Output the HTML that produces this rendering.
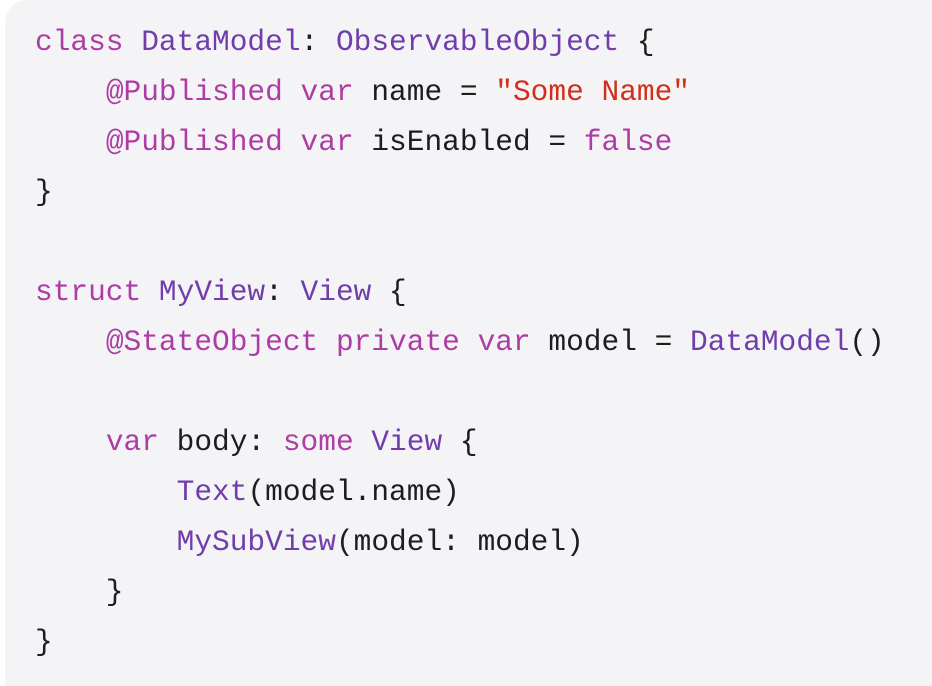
<!DOCTYPE html>
<html><head><style>
html,body{margin:0;padding:0;background:#fff;width:932px;height:686px;overflow:hidden}
.b{position:absolute;left:5px;top:0;width:927px;height:686px;background:#f4f4f6;border-radius:22px 0 0 0}
pre{position:absolute;left:35px;top:17px;margin:0;font-family:"Liberation Mono",monospace;font-size:29.5px;line-height:50px;color:#1d1d1f}
.k{color:#ad3da4}.t{color:#703daa}.s{color:#d12f1b}
</style></head><body><div class="b"></div>
<pre><span class="k">class</span> <span class="t">DataModel</span>: <span class="t">ObservableObject</span> {
    <span class="k">@Published</span> <span class="k">var</span> name = <span class="s">"Some Name"</span>
    <span class="k">@Published</span> <span class="k">var</span> isEnabled = <span class="k">false</span>
}

<span class="k">struct</span> <span class="t">MyView</span>: <span class="t">View</span> {
    <span class="k">@StateObject</span> <span class="k">private</span> <span class="k">var</span> model = <span class="t">DataModel</span>()

    <span class="k">var</span> body: <span class="k">some</span> <span class="t">View</span> {
        <span class="t">Text</span>(model.name)
        <span class="t">MySubView</span>(model: model)
    }
}</pre>
</body></html>
